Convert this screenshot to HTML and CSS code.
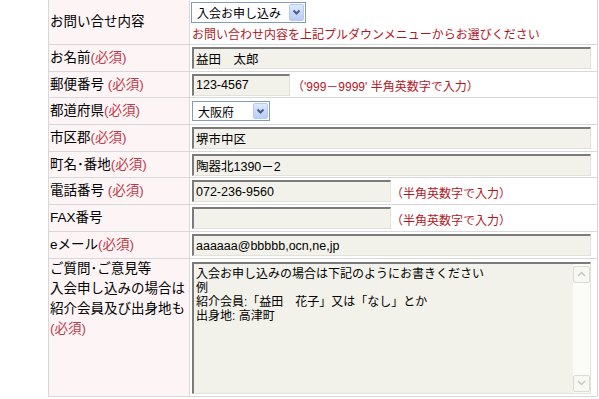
FILE: index.html
```html
<!DOCTYPE html>
<html lang="ja">
    <head>
        <meta charset="utf-8">
        <title>お問い合せ</title>
        <link rel="stylesheet" href="styles.css">
    </head>

    <body>
        <div class="page">
            <table class="form">
                <tr class="row-kind">
                    <th>お問い合せ内容</th>
                    <td class="top">
                        <div class="select kind">
                            <span class="select-text">入会お申し込み</span>
                            <span class="drop"><svg width="9" height="7" viewBox="0 0 9 7"><polyline points="1.5,1.5 4.5,4.5 7.5,1.5" fill="none" stroke="#4a5f86" stroke-width="2"/></svg></span>
                        </div>
                        <p class="note block">お問い合わせ内容を上記プルダウンメニューからお選びください</p>
                    </td>
                </tr>
                <tr class="row-27">
                    <th>お名前<span class="req">(必須)</span></th>
                    <td><div class="line"><input class="field long" value="益田　太郎"></div></td>
                </tr>
                <tr class="row-26">
                    <th>郵便番号 <span class="req">(必須)</span></th>
                    <td><div class="line"><input class="field zip" value="123-4567"><span class="note">（'999－9999' 半角英数字で入力）</span></div></td>
                </tr>
                <tr class="row-27">
                    <th>都道府県<span class="req">(必須)</span></th>
                    <td>
                        <div class="line">
                            <div class="select pref">
                                <span class="select-text">大阪府</span>
                                <span class="drop"><svg width="9" height="7" viewBox="0 0 9 7"><polyline points="1.5,1.5 4.5,4.5 7.5,1.5" fill="none" stroke="#4a5f86" stroke-width="2"/></svg></span>
                            </div>
                        </div>
                    </td>
                </tr>
                <tr class="row-27">
                    <th>市区郡<span class="req">(必須)</span></th>
                    <td><div class="line"><input class="field long" value="堺市中区"></div></td>
                </tr>
                <tr class="row-26">
                    <th>町名･番地<span class="req">(必須)</span></th>
                    <td><div class="line"><input class="field long" value="陶器北1390－2"></div></td>
                </tr>
                <tr class="row-27">
                    <th>電話番号 <span class="req">(必須)</span></th>
                    <td><div class="line"><input class="field tel" value="072-236-9560"><span class="note">（半角英数字で入力）</span></div></td>
                </tr>
                <tr class="row-27">
                    <th>FAX番号</th>
                    <td><div class="line"><input class="field tel" value=""><span class="note">（半角英数字で入力）</span></div></td>
                </tr>
                <tr class="row-27">
                    <th>eメール<span class="req">(必須)</span></th>
                    <td><div class="line"><input class="field long" value="aaaaaa@bbbbb,ocn,ne,jp"></div></td>
                </tr>
                <tr class="row-memo">
                    <th class="top">ご質問･ご意見等<br>入会申し込みの場合は<br>紹介会員及び出身地も<br><span class="req">(必須)</span></th>
                    <td>
                        <div class="memo">
                            <textarea>入会お申し込みの場合は下記のようにお書きください
例
紹介会員:「益田　花子」又は「なし」とか
出身地: 高津町</textarea>
                            <div class="scroll">
                                <span class="sbtn"><svg width="9" height="6" viewBox="0 0 9 6"><polyline points="1,5 4.5,1.5 8,5" fill="none" stroke="#c4c4c0" stroke-width="1.5"/></svg></span>
                                <span class="sbtn"><svg width="9" height="6" viewBox="0 0 9 6"><polyline points="1,1 4.5,4.5 8,1" fill="none" stroke="#c4c4c0" stroke-width="1.5"/></svg></span>
                            </div>
                        </div>
                    </td>
                </tr>
            </table>
        </div>
    </body>
</html>
```

FILE: styles.css
```css
body {
    margin: 0;
    background: #fff;
    color: #000;
    font-family: "Liberation Sans", "Noto Sans CJK JP", sans-serif;
}

.page {
    padding-left: 48px;
}

.form {
    border-collapse: separate;
    border-spacing: 0;
    width: 550px;
}

.form th,
.form td {
    padding: 0;
    border-right: 1px solid #d8d8d8;
    border-bottom: 1px solid #d8d8d8;
    vertical-align: middle;
}

.form th {
    box-sizing: border-box;
    width: 142px;
    padding-left: 1px;
    border-left: 1px solid #d8d8d8;
    background: #fcf4f5;
    font-size: 13.5px;
    font-weight: normal;
    line-height: 20px;
    text-align: left;
    white-space: nowrap;
}

.form td {
    padding-left: 2px;
    font-size: 12px;
}

.form .top {
    vertical-align: top;
}

.row-kind { height: 45px; }
.row-27 { height: 27px; }
.row-26 { height: 26px; }
.row-memo { height: 138px; }

.row-kind td {
    padding-top: 2px;
}

.req {
    color: #c23a4a;
}

.line {
    display: flex;
    align-items: center;
}

.note {
    color: #b3161f;
    font-size: 12px;
    line-height: 14px;
    padding-top: 5px;
    white-space: nowrap;
}

.note.block {
    margin: 5px 0 0;
    padding: 0;
}

.field {
    box-sizing: border-box;
    height: 22px;
    margin: 0;
    padding: 0 2px;
    border-style: solid;
    border-width: 2px 1px 1px 2px;
    border-color: #7b7b7b #e2e1da #e2e1da #7b7b7b;
    background: #f3f2ea;
    color: #000;
    font-family: "Liberation Sans", "Noto Sans CJK JP", sans-serif;
    font-size: 12.5px;
    outline: none;
}

.field.long { width: 399px; }
.field.zip { width: 98px; margin-right: 2px; }
.field.tel { width: 199px; }

.select {
    display: inline-flex;
    align-items: center;
    box-sizing: border-box;
    border: 1px solid #7f9db9;
    background: #fff;
}

.select.kind {
    width: 115px;
    height: 21px;
    margin-left: -1px;
}

.select.pref {
    width: 78px;
    height: 20px;
}

.select-text {
    flex: 1;
    padding-left: 5px;
    font-size: 12px;
    white-space: nowrap;
}

.drop {
    display: flex;
    align-items: center;
    justify-content: center;
    box-sizing: border-box;
    width: 15px;
    height: calc(100% - 2px);
    margin-right: 1px;
    border: 1px solid #b7c9f2;
    border-radius: 2px;
    background: linear-gradient(#dfe8fd, #b9ccf6);
}

.memo {
    display: flex;
    box-sizing: border-box;
    width: 399px;
    height: 132px;
    border-style: solid;
    border-width: 2px 1px 1px 2px;
    border-color: #7b7b7b #e2e1da #e2e1da #7b7b7b;
    background: #f3f2ea;
}

.memo textarea {
    flex: 1;
    margin: 0;
    padding: 3px 2px;
    border: 0;
    background: transparent;
    color: #000;
    font-family: "Liberation Sans", "Noto Sans CJK JP", sans-serif;
    font-size: 12px;
    line-height: 14px;
    overflow: hidden;
    resize: none;
    outline: none;
}

.scroll {
    display: flex;
    flex-direction: column;
    justify-content: space-between;
    width: 17px;
    padding: 2px 0 1px;
    background: #fbfbf8;
}

.sbtn {
    display: flex;
    align-items: center;
    justify-content: center;
    box-sizing: border-box;
    height: 17px;
    border: 1px solid #dcdcd4;
    border-radius: 2px;
    background: #f8f8f3;
}
```
